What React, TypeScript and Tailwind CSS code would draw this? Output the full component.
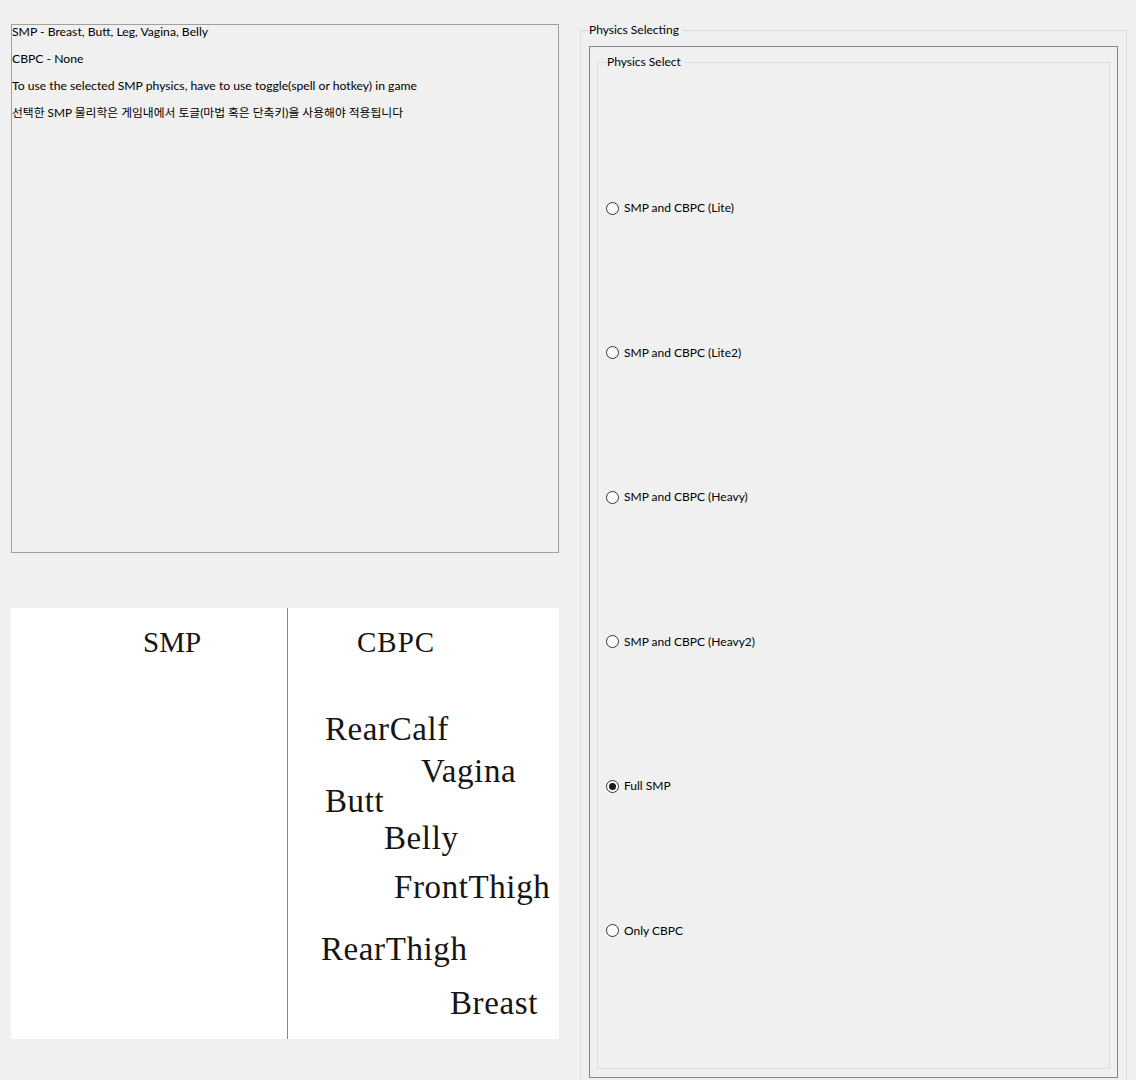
import React from 'react';

const uiFont = "font-['Lato','Noto_Sans_CJK_KR',sans-serif]";

const notes = [
  'SMP - Breast, Butt, Leg, Vagina, Belly',
  'CBPC - None',
  'To use the selected SMP physics, have to use toggle(spell or hotkey) in game',
];

const options = [
  'SMP and CBPC (Lite)',
  'SMP and CBPC (Lite2)',
  'SMP and CBPC (Heavy)',
  'SMP and CBPC (Heavy2)',
  'Full SMP',
  'Only CBPC',
];

// body parts handled by CBPC, placed on the canvas like the original form
const cbpcParts = [
  { name: 'RearCalf', cls: 'left-[37px] top-[105px]' },
  { name: 'Vagina', cls: 'left-[133px] top-[147px]' },
  { name: 'Butt', cls: 'left-[37px] top-[177px]' },
  { name: 'Belly', cls: 'left-[96px] top-[214px]' },
  { name: 'FrontThigh', cls: 'left-[106px] top-[263px]' },
  { name: 'RearThigh', cls: 'left-[33px] top-[325px]' },
  { name: 'Breast', cls: 'left-[162px] top-[379px]' },
];

function Radio({ label, checked }: { label: string; checked?: boolean }) {
  return (
    <label className="flex items-center gap-[5px] h-4 text-[12px] text-black">
      <span className="w-[13px] h-[13px] rounded-full border border-[#333] bg-white flex items-center justify-center">
        {checked && <span className="w-[7px] h-[7px] rounded-full bg-[#1a1a1a]" />}
      </span>
      {label}
    </label>
  );
}

export default function App() {
  return (
    <div className={`flex w-[1136px] h-[1080px] bg-[#f0f0f0] overflow-hidden ${uiFont}`}>
      <div className="flex flex-col w-[548px] ml-[11px] mt-[24px]">
        <div className="h-[529px] border border-[#a0a0a0] text-[12.2px] leading-[13.5px] text-black">
          {notes.map((line) => (
            <p key={line} className="mb-[13.5px] whitespace-nowrap">
              {line}
            </p>
          ))}
          <p className="text-[11.8px] whitespace-nowrap">
            선택한 SMP 물리학은 게임내에서 토글(마법 혹은 단축키)을 사용해야 적용됩니다
          </p>
        </div>

        <div className="flex mt-[55px] h-[431px] bg-white font-['Liberation_Serif',serif] text-[#151515]">
          <div className="w-[277px] border-r border-[#888]">
            <p className="ml-[132px] mt-[20px] text-[29px] leading-none">SMP</p>
          </div>
          <div className="relative flex-1">
            <p className="ml-[69px] mt-[20px] text-[29px] leading-none tracking-[1px]">CBPC</p>
            {cbpcParts.map((p) => (
              <span
                key={p.name}
                className={`absolute text-[33px] leading-none tracking-[0.6px] ${p.cls}`}
              >
                {p.name}
              </span>
            ))}
          </div>
        </div>
      </div>

      <fieldset className="ml-[21px] mt-[22px] w-[547px] h-[1080px] border border-[#dcdcdc] px-[8px] pt-[8px] text-[12px]">
        <legend className="pr-[3px] leading-4">Physics Selecting</legend>
        <div className="h-[1032px] border border-[#828790] p-[7px]">
          <fieldset className="h-[1015px] border border-[#dcdcdc] px-[8px] pt-[130px]">
            <legend className="ml-[1px] pr-[3px] leading-4">Physics Select</legend>
            <div className="flex flex-col gap-[128.5px]">
              {options.map((o) => (
                <Radio key={o} label={o} checked={o === 'Full SMP'} />
              ))}
            </div>
          </fieldset>
        </div>
      </fieldset>
    </div>
  );
}
